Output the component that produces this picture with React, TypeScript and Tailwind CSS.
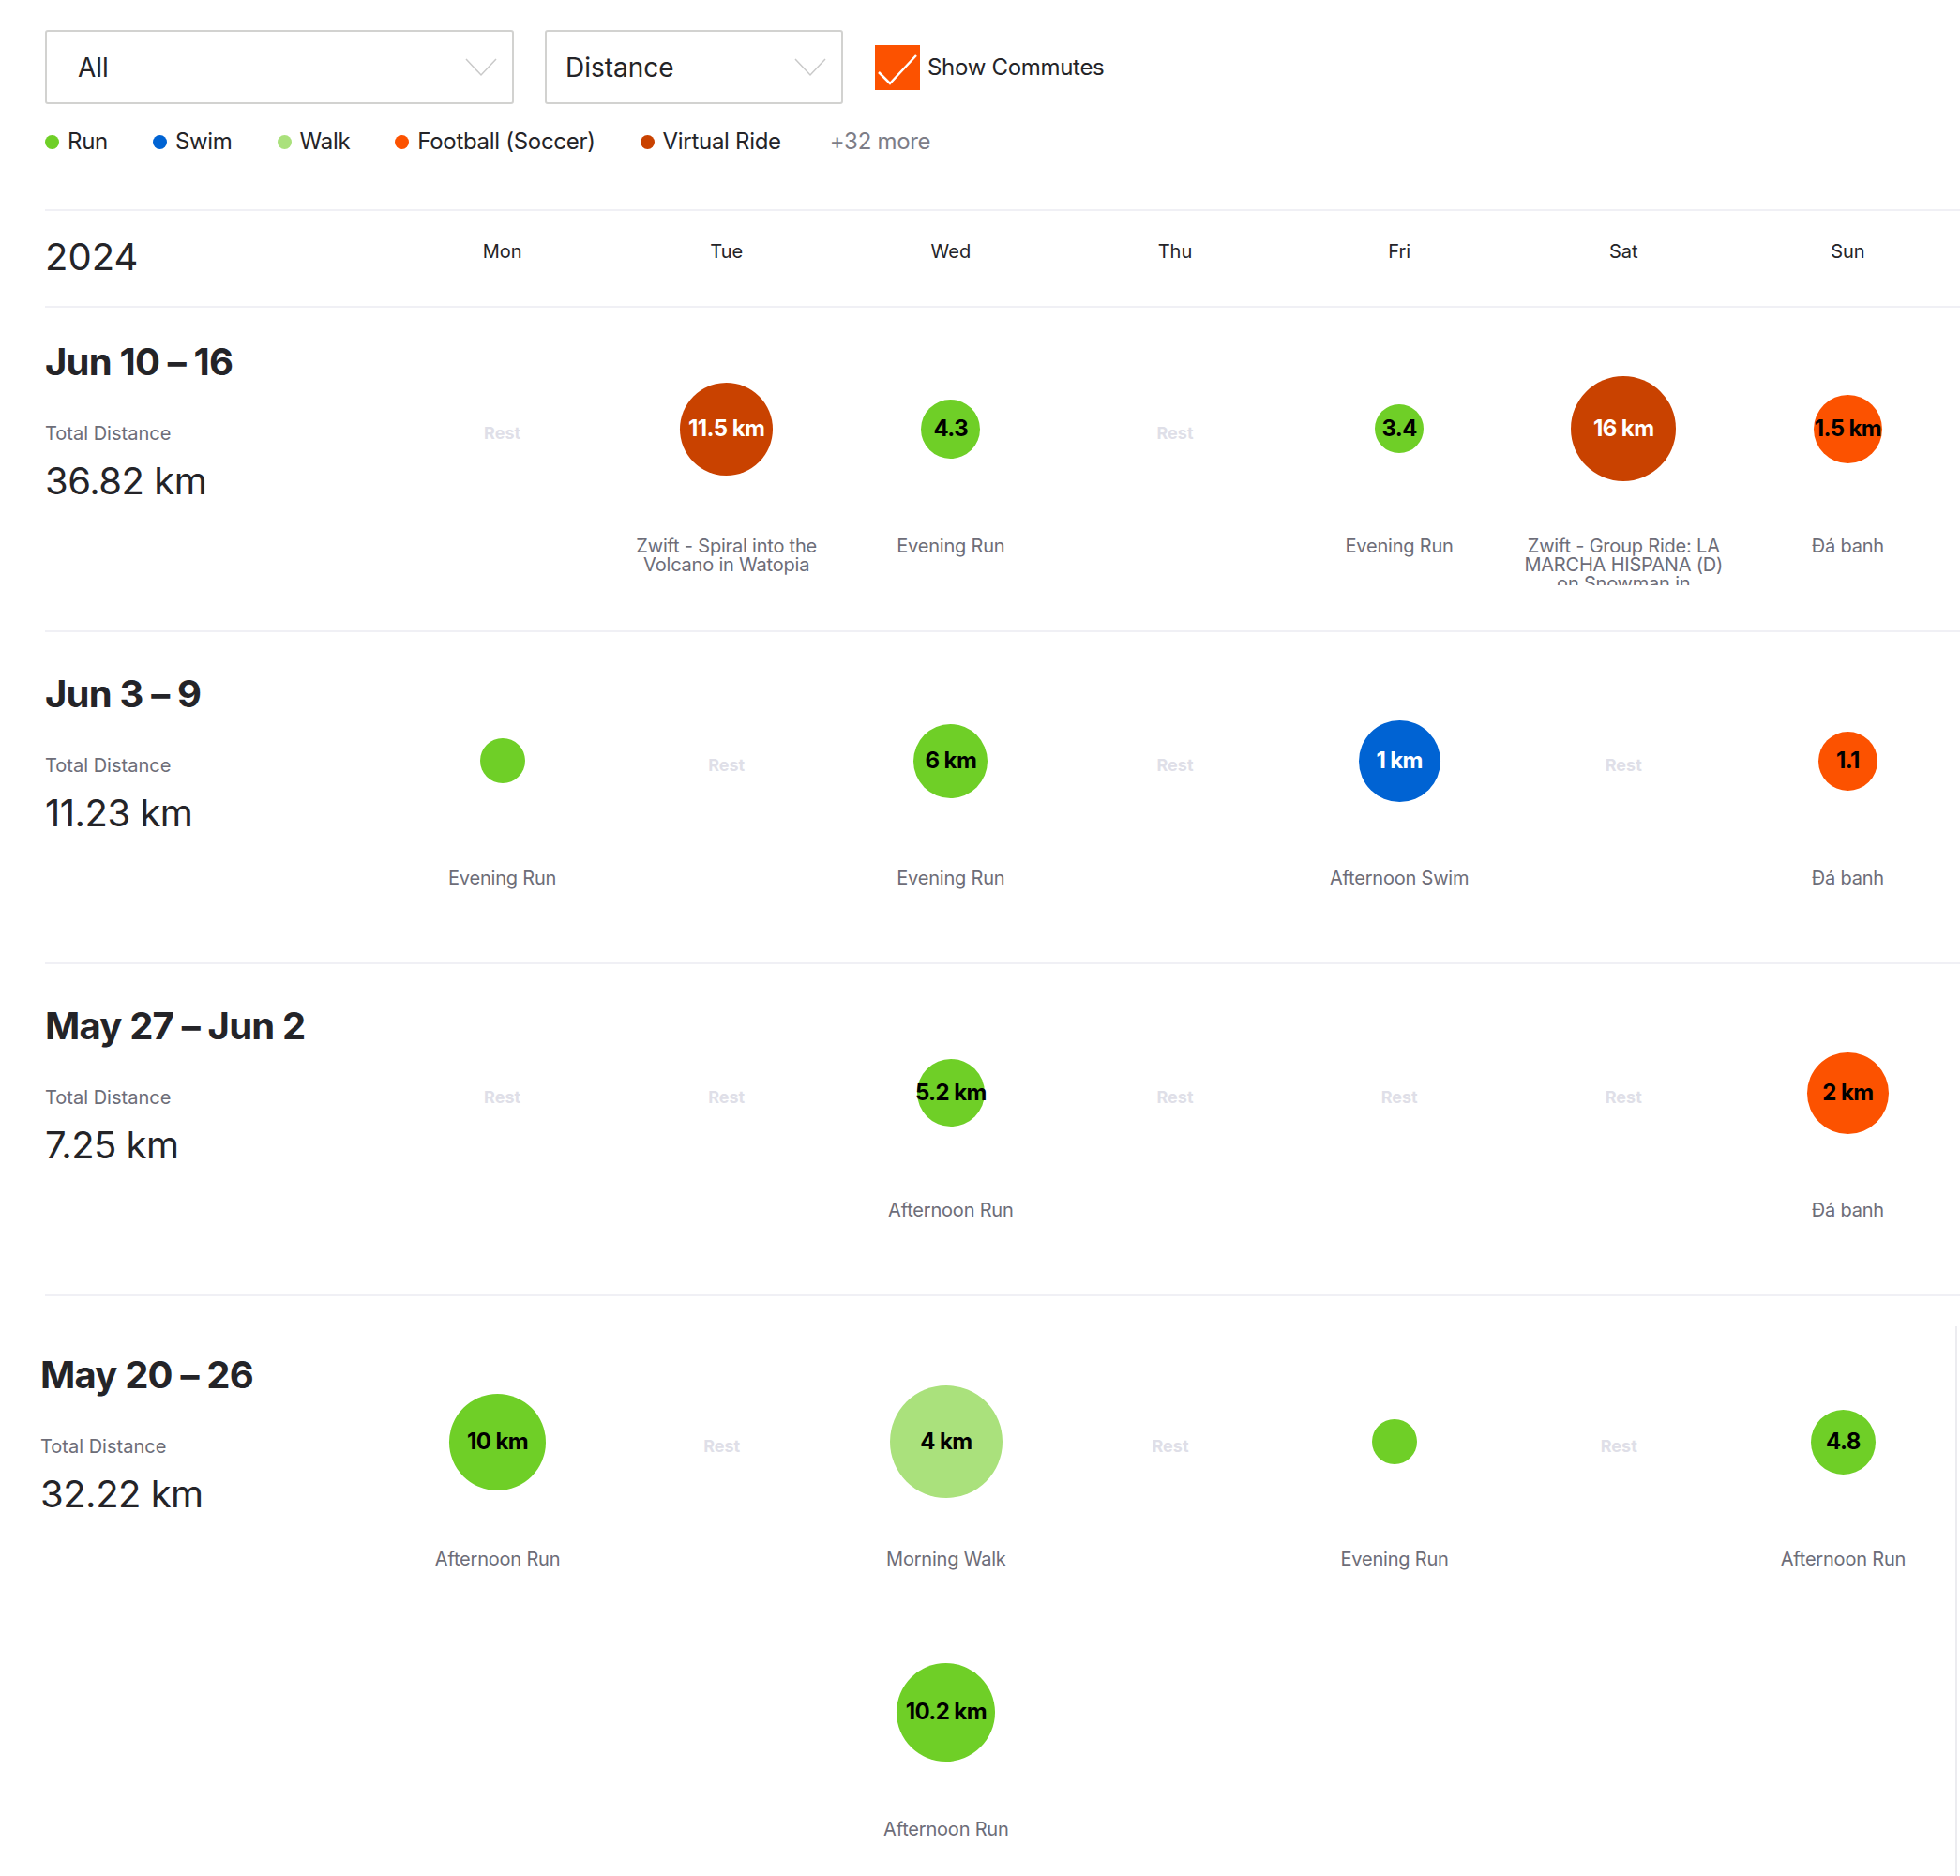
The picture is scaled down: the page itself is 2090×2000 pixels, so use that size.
import React from "react";

type Sport = "run" | "swim" | "walk" | "football" | "vride";

interface Activity {
  sport: Sport;
  size: number;
  label: string;
  name: string;
}

type Day = Activity[] | null;

interface Week {
  title: string;
  total: string;
  days: Day[];
}

const SPORT_BG: Record<Sport, string> = {
  run: "bg-[#6fcf27]",
  swim: "bg-[#0063d3]",
  walk: "bg-[#aae17c]",
  football: "bg-[#fc5200]",
  vride: "bg-[#c94200]",
};

const SPORT_TEXT: Record<Sport, string> = {
  run: "text-black",
  swim: "text-white",
  walk: "text-black",
  football: "text-black",
  vride: "text-white",
};

const LEGEND: { name: string; dot: string }[] = [
  { name: "Run", dot: "bg-[#6fcf27]" },
  { name: "Swim", dot: "bg-[#0063d3]" },
  { name: "Walk", dot: "bg-[#aae17c]" },
  { name: "Football (Soccer)", dot: "bg-[#fc5200]" },
  { name: "Virtual Ride", dot: "bg-[#c94200]" },
];

const DAYS = ["Mon", "Tue", "Wed", "Thu", "Fri", "Sat", "Sun"];

const WEEKS: Week[] = [
  {
    title: "Jun 10 – 16",
    total: "36.82 km",
    days: [
      null,
      [{ sport: "vride", size: 99, label: "11.5 km", name: "Zwift - Spiral into the Volcano in Watopia" }],
      [{ sport: "run", size: 63, label: "4.3", name: "Evening Run" }],
      null,
      [{ sport: "run", size: 52, label: "3.4", name: "Evening Run" }],
      [{ sport: "vride", size: 112, label: "16 km", name: "Zwift - Group Ride: LA MARCHA HISPANA (D) on Snowman in Watopia" }],
      [{ sport: "football", size: 73, label: "1.5 km", name: "Đá banh" }],
    ],
  },
  {
    title: "Jun 3 – 9",
    total: "11.23 km",
    days: [
      [{ sport: "run", size: 48, label: "", name: "Evening Run" }],
      null,
      [{ sport: "run", size: 79, label: "6 km", name: "Evening Run" }],
      null,
      [{ sport: "swim", size: 87, label: "1 km", name: "Afternoon Swim" }],
      null,
      [{ sport: "football", size: 63, label: "1.1", name: "Đá banh" }],
    ],
  },
  {
    title: "May 27 – Jun 2",
    total: "7.25 km",
    days: [
      null,
      null,
      [{ sport: "run", size: 72, label: "5.2 km", name: "Afternoon Run" }],
      null,
      null,
      null,
      [{ sport: "football", size: 87, label: "2 km", name: "Đá banh" }],
    ],
  },
  {
    title: "May 20 – 26",
    total: "32.22 km",
    days: [
      [{ sport: "run", size: 103, label: "10 km", name: "Afternoon Run" }],
      null,
      [
        { sport: "walk", size: 120, label: "4 km", name: "Morning Walk" },
        { sport: "run", size: 105, label: "10.2 km", name: "Afternoon Run" },
      ],
      null,
      [{ sport: "run", size: 48, label: "", name: "Evening Run" }],
      null,
      [{ sport: "run", size: 69, label: "4.8", name: "Afternoon Run" }],
    ],
  },
];

function Chevron() {
  return (
    <svg width="34" height="20" viewBox="0 0 34 20" fill="none">
      <polyline points="1,1 17,18 33,1" stroke="#c9c9c9" strokeWidth="1.5" />
    </svg>
  );
}

function Select({ label, width, padLeft }: { label: string; width: string; padLeft: string }) {
  return (
    <div
      className={`${width} ${padLeft} h-[79px] flex items-center justify-between pr-[16px] border-2 border-[#d2d2d0] rounded-[3px] bg-white`}
    >
      <span className="text-[28px] text-[#242428]">{label}</span>
      <Chevron />
    </div>
  );
}

function ActivityBlock({ a, first }: { a: Activity; first: boolean }) {
  return (
    <div className={`flex flex-col items-center ${first ? "" : "mt-[46px]"}`}>
      <div className="h-[150px] flex items-center justify-center">
        <div
          className={`${SPORT_BG[a.sport]} ${SPORT_TEXT[a.sport]} rounded-full flex items-center justify-center text-[24px] font-bold tracking-[-0.6px] whitespace-nowrap`}
          style={{ width: a.size, height: a.size }}
        >
          {a.label}
        </div>
      </div>
      {/* long titles get cut after a couple of lines, like the original */}
      <div className="mt-[40px] w-[216px] h-[52px] overflow-hidden text-center text-[20px] leading-[20px] text-[#6d6d78] tracking-[-0.2px]">
        {a.name}
      </div>
    </div>
  );
}

function DayCell({ day }: { day: Day }) {
  if (!day) {
    return (
      <div className="pt-[20px] flex flex-col items-center">
        <div className="h-[150px] flex items-center justify-center pt-[8px] text-[18px] font-bold text-[#dfdfe8]">
          Rest
        </div>
      </div>
    );
  }
  return (
    <div className="pt-[20px] flex flex-col items-center">
      {day.map((a, i) => (
        <ActivityBlock key={i} a={a} first={i === 0} />
      ))}
    </div>
  );
}

function WeekRow({ week, pad }: { week: Week; pad: string }) {
  return (
    <div className={`grid grid-cols-[368px_repeat(7,1fr)] ${pad}`}>
      <div>
        <div className="text-[40px] leading-[48px] font-bold text-[#242428] tracking-[-0.8px]">{week.title}</div>
        <div className="mt-[38px] text-[20px] leading-[28px] text-[#6d6d78]">Total Distance</div>
        <div className="mt-[13px] text-[40px] leading-[48px] text-[#242428] tracking-[-0.5px]">{week.total}</div>
      </div>
      {week.days.map((d, i) => (
        <DayCell key={i} day={d} />
      ))}
    </div>
  );
}

export default function App() {
  return (
    <div className="w-[2090px] min-h-[2000px] bg-white pl-[48px] pt-[32px] font-['Inter','Noto_Sans',sans-serif] overflow-hidden">
      <div className="flex items-center">
        <Select label="All" width="w-[500px]" padLeft="pl-[33px]" />
        <div className="ml-[33px]">
          <Select label="Distance" width="w-[318px]" padLeft="pl-[20px]" />
        </div>
        <div className="ml-[34px] w-[48px] h-[48px] bg-[#fc5200] flex items-center justify-center">
          <svg width="48" height="48" viewBox="0 0 48 48" fill="none">
            <polyline points="4,29 16,41 44,11" stroke="white" strokeWidth="2.5" />
          </svg>
        </div>
        <span className="ml-[8px] text-[24px] text-[#242428] tracking-[-0.3px]">Show Commutes</span>
      </div>

      <div className="mt-[24px] flex items-center h-[32px] gap-[48px]">
        {LEGEND.map((l) => (
          <div key={l.name} className="flex items-center gap-[9px]">
            <span className={`w-[15px] h-[15px] rounded-full ${l.dot}`} />
            <span className="text-[24px] text-[#242428] tracking-[-0.3px]">{l.name}</span>
          </div>
        ))}
        <span className="ml-[4px] text-[24px] text-[#7d7d87] tracking-[-0.3px]">+32 more</span>
      </div>

      <div className="mt-[56px] h-[2px] bg-[#f0f0f5]" />

      <div className="grid grid-cols-[368px_repeat(7,1fr)] h-[101px]">
        <div className="pt-[25px] text-[40px] leading-[48px] text-[#242428]">2024</div>
        {DAYS.map((d) => (
          <div key={d} className="pt-[29px] text-center text-[20px] leading-[28px] text-[#242428]">
            {d}
          </div>
        ))}
      </div>

      <div className="h-[2px] bg-[#f0f0f5]" />
      <WeekRow week={WEEKS[0]} pad="pt-[34px] pb-[48px]" />

      <div className="h-[2px] bg-[#f0f0f5]" />
      <WeekRow week={WEEKS[1]} pad="pt-[42px] pb-[48px]" />

      <div className="h-[2px] bg-[#f0f0f5]" />
      <WeekRow week={WEEKS[2]} pad="pt-[42px] pb-[48px]" />

      <div className="h-[2px] bg-[#f0f0f5]" />
      <div className="mt-[32px] -ml-[5px] mr-[3px] border-r-2 border-[#ececf0]">
        <WeekRow week={WEEKS[3]} pad="pt-[28px] pb-[48px]" />
      </div>
    </div>
  );
}
